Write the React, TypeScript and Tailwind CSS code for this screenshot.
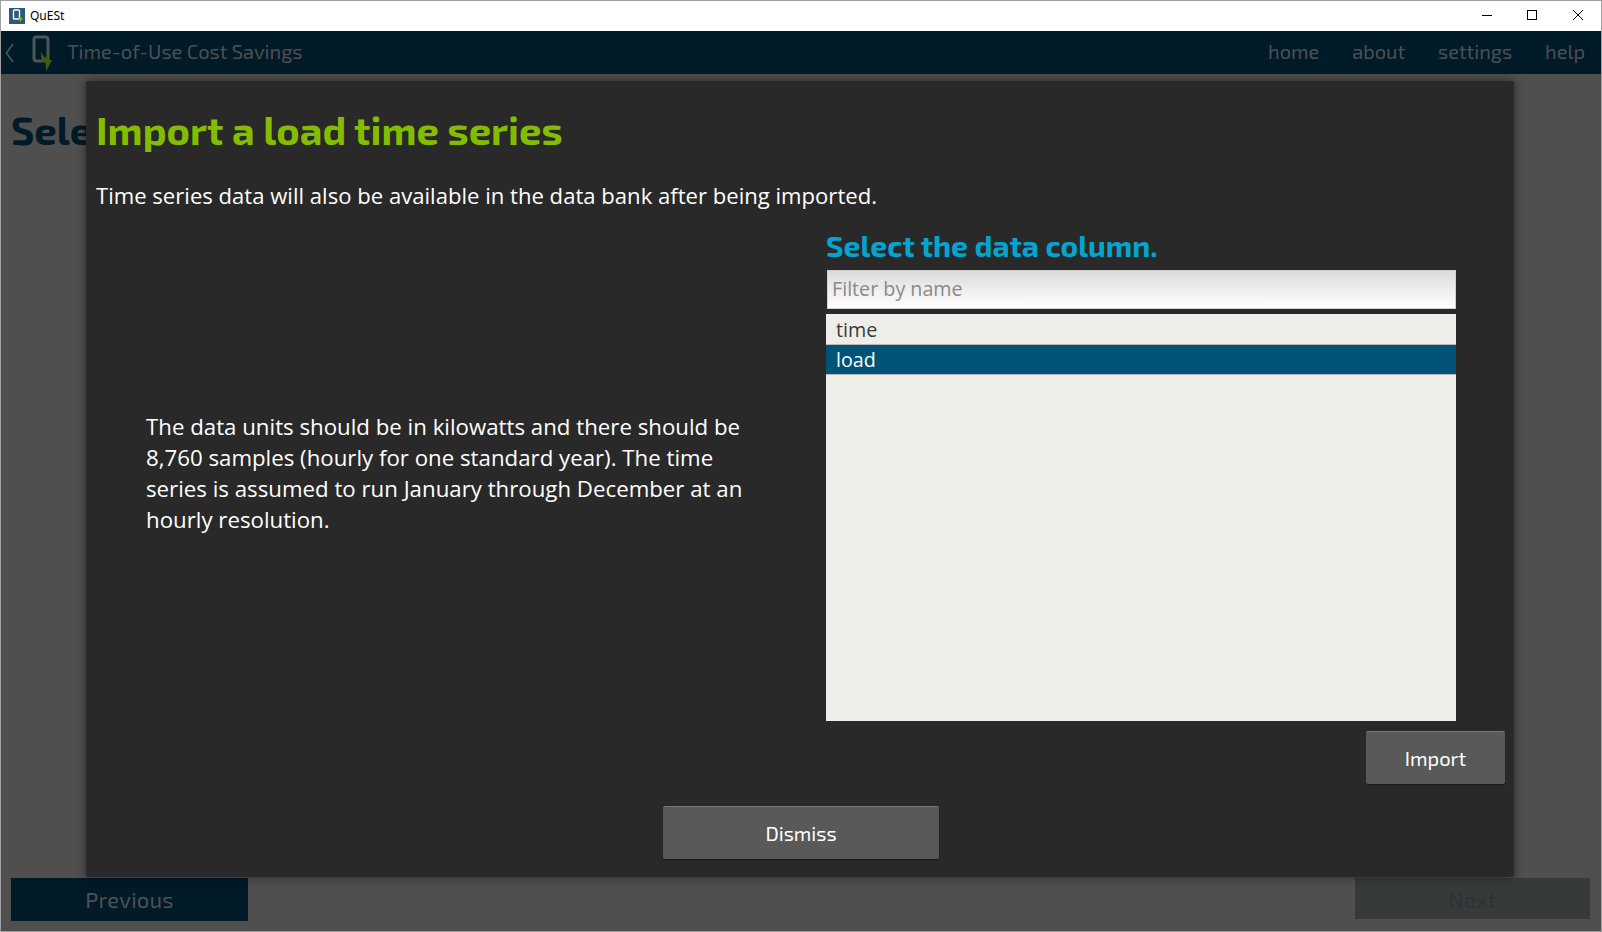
const exo = "font-['Exo_2','Open_Sans',sans-serif]";

function WindowButtons() {
  return (
    <div className="flex items-center pb-[2px]">
      <div className="w-[45px] h-[28px] flex items-center justify-center">
        <svg width="12" height="12" viewBox="0 0 12 12"><path d="M1 6.5H11" stroke="#000" strokeWidth="1" /></svg>
      </div>
      <div className="w-[45px] h-[28px] flex items-center justify-center">
        <svg width="12" height="12" viewBox="0 0 12 12"><rect x="1.5" y="1.5" width="9" height="9" fill="none" stroke="#000" strokeWidth="1" /></svg>
      </div>
      <div className="w-[47px] h-[28px] flex items-center justify-center">
        <svg width="12" height="12" viewBox="0 0 12 12"><path d="M1 1L11 11M11 1L1 11" stroke="#000" strokeWidth="1" /></svg>
      </div>
    </div>
  );
}

function Logo() {
  return (
    <svg width="22" height="38" viewBox="0 0 22 38" className="ml-[17px] mt-[2px]">
      <path d="M4.5 2H13.5Q16 2 16 4.5V23.5Q16 26 13.5 26H4.5Q2 26 2 23.5V4.5Q2 2 4.5 2Z" fill="none" stroke="#4f5456" strokeWidth="3" />
      <path d="M9 17L13 23L18 16.5L15.5 25L20 25L14 36.5L13.5 27L9.5 27Z" fill="#3f5c0c" />
    </svg>
  );
}

export default function App() {
  return (
    <div className="w-[1602px] h-[932px] flex flex-col bg-[#4f4f4f] border border-[#a0a0a0] font-['Open_Sans',sans-serif] overflow-hidden">
      <div className="h-[30px] bg-white flex items-center justify-between shrink-0">
        <div className="flex items-center pl-[8px] gap-[5px]">
          <svg width="16" height="16" viewBox="0 0 16 16">
            <rect width="16" height="16" fill="#2a5a7c" />
            <rect x="4.5" y="2" width="6" height="9" rx="1" fill="none" stroke="#fff" strokeWidth="1.4" />
            <path d="M9.5 11H13.5M11.5 9V13.5" stroke="#7fbb00" strokeWidth="1.4" />
          </svg>
          <span className="text-[12px] text-black font-['Noto_Sans',sans-serif]">QuESt</span>
        </div>
        <WindowButtons />
      </div>

      <div className="h-[43px] bg-[#001a28] flex items-center justify-between shrink-0">
        <div className="flex items-center">
          <svg width="12" height="22" viewBox="0 0 12 22" className="ml-[2px]"><path d="M10 2L3.5 11L10 20" fill="none" stroke="#4a4f52" strokeWidth="1.8" /></svg>
          <Logo />
          <span className={`${exo} ml-[13px] mb-[3px] text-[20px] text-[#4d4f50]`}>Time-of-Use Cost Savings</span>
        </div>
        <nav className={`${exo} flex items-center gap-[33px] pr-[16px] pb-[3px] text-[20px] text-[#4d4f50]`}>
          <span>home</span>
          <span>about</span>
          <span>settings</span>
          <span>help</span>
        </nav>
      </div>

      <div className="relative flex-1 flex flex-col justify-between px-[10px] pb-[10px]">
        <h1 className={`${exo} pt-[30px] text-[39.8px] font-bold text-[#001a28] leading-[50px]`}>Select a rate structure</h1>
        <div className="flex items-start justify-between">
          <div className={`${exo} w-[237px] h-[43px] bg-[#001a28] flex items-center justify-center text-[22px] tracking-[0.25px] text-[#4f5052]`}>Previous</div>
          <div className={`${exo} w-[235px] h-[41px] mr-[1px] bg-[#363a3b] flex items-center justify-center text-[22px] tracking-[0.25px] text-[#2f3233] pt-[2px]`}>Next</div>
        </div>

        <div className="absolute left-[85px] top-[7px] w-[1428px] h-[796px] bg-[#292929] rounded-[2px] shadow-[0_0_10px_rgba(0,0,0,0.5)] flex flex-col px-[10px]">
          <h2 className={`${exo} mt-[23px] text-[39.8px] leading-[50px] font-bold text-[#84bd00]`}>Import a load time series</h2>
          <p className="mt-[25px] text-[22.1px] leading-[32px] text-white">Time series data will also be available in the data bank after being imported.</p>

          <div className="flex mt-[16px]">
            <div className="w-[730px] h-[490px] flex items-center pl-[50px] pt-[2px]">
              <p className="w-[610px] text-[22.25px] leading-[31px] text-white">
                The data units should be in kilowatts and there should be 8,760 samples (hourly for one standard year). The time series is assumed to run January through December at an hourly resolution.
              </p>
            </div>
            <div className="w-[630px] flex flex-col">
              <h3 className={`${exo} text-[30px] leading-[36px] font-bold text-[#00a6d1]`}>Select the data column.</h3>
              <div className="mt-[7px] h-[39px] w-[629px] ml-[1px] pb-[1px] border border-[#cfcfcf] bg-gradient-to-b from-[#dcdcdc] to-white flex items-center px-[4px] text-[19.7px] text-[#8a8a8a]">Filter by name</div>
              <div className="mt-[5px] h-[407px] bg-[#eeede8] flex flex-col text-[19.7px]">
                <div className="h-[31px] pl-[10px] pt-[1px] flex items-center text-[#3a3a3a] border-b border-[#b8b8b8]">time</div>
                <div className="h-[30px] pl-[10px] flex items-center bg-[#005377] text-white border-b border-[#b8b8b8]">load</div>
              </div>
            </div>
          </div>

          <div className="flex justify-end mt-[10px] mr-[-1px]">
            <div className={`${exo} w-[139px] h-[53px] bg-[#595959] border-t border-[#7a7a7a] rounded-[2px] shadow-[0_1px_1px_rgba(0,0,0,0.4)] flex items-center justify-center text-[20px] text-white`}>Import</div>
          </div>
          <div className="flex justify-center mt-[22px] ml-[2px]">
            <div className={`${exo} w-[276px] h-[53px] bg-[#595959] border-t border-[#7a7a7a] rounded-[2px] shadow-[0_1px_1px_rgba(0,0,0,0.4)] flex items-center justify-center text-[20px] text-white`}>Dismiss</div>
          </div>
        </div>
      </div>
    </div>
  );
}
